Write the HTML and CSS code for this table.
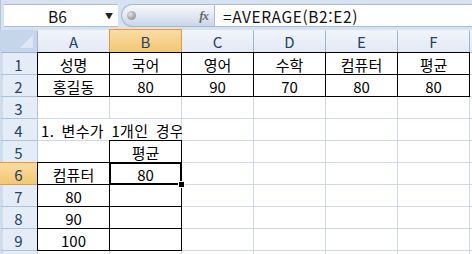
FILE: index.html
```html
<!DOCTYPE html>
<html lang="ko">
<head>
  <meta charset="UTF-8" />
  <title>Sheet1 - 평균</title>
  <link rel="stylesheet" href="styles.css">
</head>
<body>

  <div class="formula-bar">
    <div class="name-box">
      <span class="name">B6</span>
      <span class="drop">▼</span>
    </div>
    <div class="fx-pill">
      <span class="knob"></span>
      <span class="fx">fx</span>
    </div>
    <div class="formula">=AVERAGE(B2:E2)</div>
  </div>

  <div class="sheet">
    <!-- column headers -->
    <div class="corner">
      <svg width="37" height="22" viewBox="0 0 37 22"><polygon points="33,5 33,18 20,18" fill="#dfe7f2"/></svg>
    </div>
    <div class="col-h">A</div>
    <div class="col-h active">B</div>
    <div class="col-h">C</div>
    <div class="col-h">D</div>
    <div class="col-h">E</div>
    <div class="col-h">F</div>
    <div class="col-h"></div>

    <!-- 1 -->
    <div class="row-h">1</div>
    <div class="cell boxed">성명</div>
    <div class="cell boxed">국어</div>
    <div class="cell boxed">영어</div>
    <div class="cell boxed">수학</div>
    <div class="cell boxed">컴퓨터</div>
    <div class="cell boxed">평균</div>
    <div class="cell"></div>

    <!-- 2 -->
    <div class="row-h">2</div>
    <div class="cell boxed">홍길동</div>
    <div class="cell boxed">80</div>
    <div class="cell boxed">90</div>
    <div class="cell boxed">70</div>
    <div class="cell boxed">80</div>
    <div class="cell boxed">80</div>
    <div class="cell"></div>

    <!-- 3 -->
    <div class="row-h">3</div>
    <div class="cell"></div><div class="cell"></div><div class="cell"></div>
    <div class="cell"></div><div class="cell"></div><div class="cell"></div>
    <div class="cell"></div>

    <!-- 4 -->
    <div class="row-h">4</div>
    <div class="cell left span2">1. 변수가 1개인 경우</div>
    <div class="cell"></div><div class="cell"></div>
    <div class="cell"></div><div class="cell"></div><div class="cell"></div>

    <!-- 5 -->
    <div class="row-h">5</div>
    <div class="cell"></div>
    <div class="cell boxed">평균</div>
    <div class="cell"></div><div class="cell"></div><div class="cell"></div>
    <div class="cell"></div><div class="cell"></div>

    <!-- 6 -->
    <div class="row-h active">6</div>
    <div class="cell boxed">컴퓨터</div>
    <div class="cell boxed selected">80<span class="handle"></span></div>
    <div class="cell"></div><div class="cell"></div><div class="cell"></div>
    <div class="cell"></div><div class="cell"></div>

    <!-- 7 -->
    <div class="row-h">7</div>
    <div class="cell boxed">80</div>
    <div class="cell boxed"></div>
    <div class="cell"></div><div class="cell"></div><div class="cell"></div>
    <div class="cell"></div><div class="cell"></div>

    <!-- 8 -->
    <div class="row-h">8</div>
    <div class="cell boxed">90</div>
    <div class="cell boxed"></div>
    <div class="cell"></div><div class="cell"></div><div class="cell"></div>
    <div class="cell"></div><div class="cell"></div>

    <!-- 9 -->
    <div class="row-h">9</div>
    <div class="cell boxed">100</div>
    <div class="cell boxed"></div>
    <div class="cell"></div><div class="cell"></div><div class="cell"></div>
    <div class="cell"></div><div class="cell"></div>

    <!-- 10, only its top edge shows -->
    <div class="row-h"></div>
    <div class="cell"></div><div class="cell"></div><div class="cell"></div>
    <div class="cell"></div><div class="cell"></div><div class="cell"></div>
    <div class="cell"></div>
  </div>

</body>
</html>
```

FILE: styles.css
```css
body {
  margin: 0;
  width: 472px;
  height: 254px;
  overflow: hidden;
  font-family: "Noto Sans CJK KR", "Noto Sans", sans-serif;
  font-size: 15px;
  color: #000;
  background: #fff;
}

/* formula bar */
.formula-bar {
  display: flex;
  height: 30px;
  box-sizing: border-box;
  padding: 4px 0 3px 3px;
  background: #d6e2f1;
  border-left: 1px solid #b3c6de;
}

.name-box {
  display: flex;
  align-items: center;
  width: 114px;
  box-sizing: border-box;
  background: #fff;
  border-top: 1px solid #a9bdd7;
  border-bottom: 1px solid #a9bdd7;
  padding-left: 44px;
}

.name {
  flex: 1;
  font-size: 15.5px;
  color: #111;
}

.drop {
  font-size: 8px;
  margin-right: 5px;
  color: #222;
}

.fx-pill {
  display: flex;
  align-items: center;
  justify-content: space-between;
  width: 93px;
  box-sizing: border-box;
  margin-left: 3px;
  padding: 0 6px 0 5px;
  background: linear-gradient(#f7f9fc, #dfe7f2 55%, #c9d6e8);
  border: 1px solid #a3b8d3;
  border-right: none;
  border-radius: 12px 0 0 12px;
}

.knob {
  width: 9px;
  height: 9px;
  border-radius: 50%;
  background: radial-gradient(circle at 35% 35%, #e4e4e4, #9a9a9a 70%, #858585);
}

.fx {
  font-family: "Liberation Serif", serif;
  font-style: italic;
  font-weight: bold;
  font-size: 13px;
  color: #6b6b6b;
  letter-spacing: -1px;
}

.formula {
  flex: 1;
  display: flex;
  align-items: center;
  padding-left: 8px;
  background: #fff;
  border: 1px solid #a9bdd7;
  border-right: none;
  font-size: 15.5px;
  letter-spacing: 0.6px;
  color: #111;
}

/* grid */
.sheet {
  display: grid;
  grid-template-columns: 37px repeat(6, 71px) 1fr;
  grid-template-rows: 22px repeat(10, 21px);
  gap: 1px;
  background: #d0d7e5;
}

.corner {
  background: #c6d6ea;
  box-shadow: 1px 1px 0 #9eb6ce;
}

.corner svg {
  display: block;
}

.col-h,
.row-h {
  display: flex;
  align-items: center;
  justify-content: center;
  color: #27415f;
  font-size: 15px;
  padding-top: 1px;
  box-sizing: border-box;
}

.col-h {
  background: linear-gradient(#f1f5fb, #e2eaf5);
  box-shadow: 1px 1px 0 #9eb6ce;
}

.row-h {
  background: linear-gradient(to right, #cfdcec 0, #cfdcec 3px, #e4ecf7 3px);
  box-shadow: 1px 1px 0 #aec2d9;
}

.col-h.active,
.row-h.active {
  background: linear-gradient(#f9dca4, #f3c772);
  box-shadow: 0 0 0 1px #f29536;
}

.cell {
  position: relative;
  display: flex;
  align-items: center;
  justify-content: center;
  background: #fff;
  padding-top: 2px;
  box-sizing: border-box;
  white-space: nowrap;
}

.cell.left {
  justify-content: flex-start;
  padding-left: 3px;
  letter-spacing: 0.3px;
  word-spacing: 3px;
}

.span2 {
  grid-column: span 2;
}

.boxed {
  outline: 1px solid #000;
}

.selected {
  box-shadow: inset 0 0 0 1px #000;
}

.handle {
  position: absolute;
  right: -4px;
  bottom: -4px;
  width: 5px;
  height: 5px;
  background: #000;
  border: 1px solid #fff;
  z-index: 1;
}
```
